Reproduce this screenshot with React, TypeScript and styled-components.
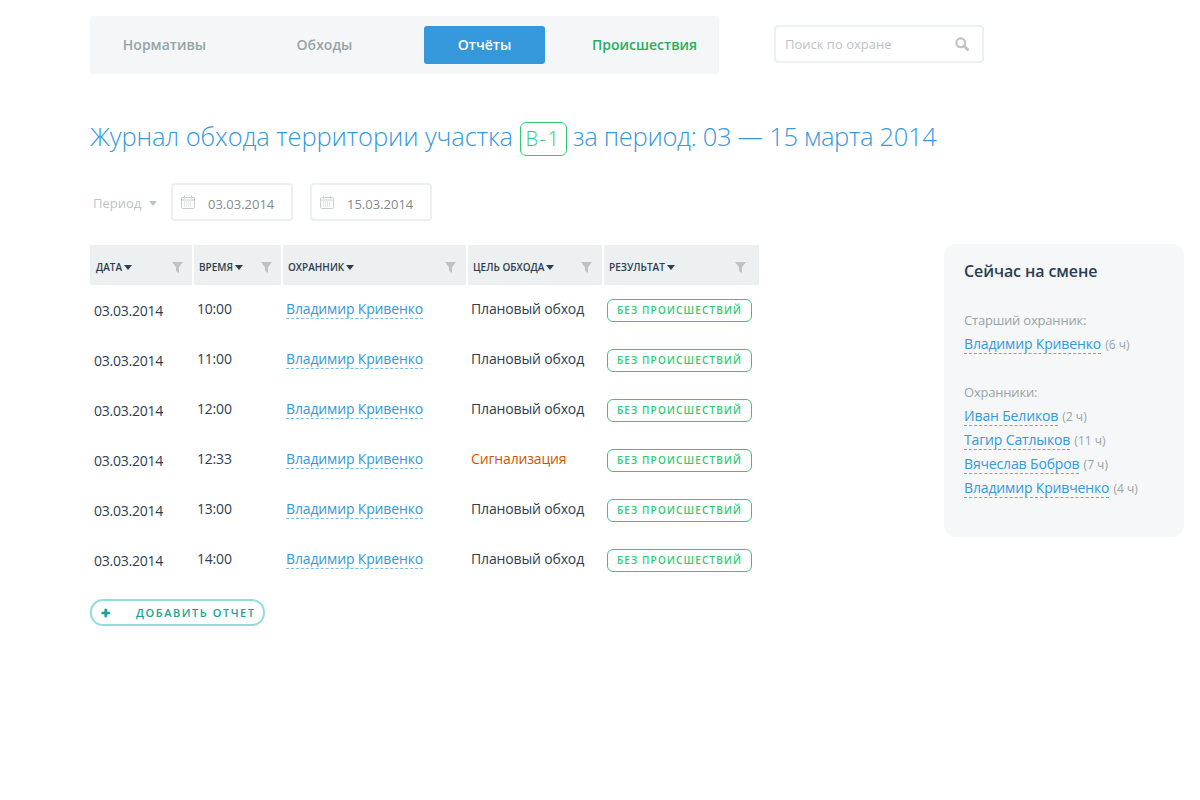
import React from 'react'
import styled, { createGlobalStyle } from 'styled-components'

const rows = [
  { time: '10:00', goal: 'Плановый обход' },
  { time: '11:00', goal: 'Плановый обход' },
  { time: '12:00', goal: 'Плановый обход' },
  { time: '12:33', goal: 'Сигнализация', alarm: true },
  { time: '13:00', goal: 'Плановый обход' },
  { time: '14:00', goal: 'Плановый обход' },
]

const guards = [
  { name: 'Иван Беликов', hours: '2 ч' },
  { name: 'Тагир Сатлыков', hours: '11 ч' },
  { name: 'Вячеслав Бобров', hours: '7 ч' },
  { name: 'Владимир Кривченко', hours: '4 ч' },
]

const columns = [
  { title: 'Дата', width: 104, left: 6, right: 9 },
  { title: 'Время', width: 89, left: 5, right: 9 },
  { title: 'Охранник', width: 185, left: 5, right: 10 },
  { title: 'Цель обхода', width: 136, left: 5, right: 10 },
  { title: 'Результат', width: 155, left: 5, right: 13 },
]

function CalendarIcon() {
  return (
    <svg width="14" height="14" viewBox="0 0 14 14" fill="none">
      <rect x="0.5" y="2.5" width="13" height="11" rx="1" stroke="#c8cdd0" />
      <path d="M0.5 5h13" stroke="#c8cdd0" />
      <path d="M3.5 0.5v3M10.5 0.5v3" stroke="#c8cdd0" />
      <path d="M3 7h8M3 9h8M3 11h8" stroke="#c8cdd0" strokeDasharray="1 1" />
    </svg>
  )
}

function FilterIcon() {
  return (
    <svg width="11" height="11" viewBox="0 0 11 11">
      <path d="M0 0h11L7 5.2V11L4 9V5.2z" fill="#bdc3c7" />
    </svg>
  )
}

function SearchIcon() {
  return (
    <svg width="14" height="14" viewBox="0 0 14 14" fill="none">
      <circle cx="5.8" cy="5.8" r="4.4" stroke="#bdc3c7" strokeWidth="2.2" />
      <path d="M9 9l3.6 3.6" stroke="#bdc3c7" strokeWidth="2.8" strokeLinecap="round" />
    </svg>
  )
}

export default function App(): JSX.Element {
  return (
    <Page>
      <GlobalStyle />
      <TopBar>
        <Nav>
          <NavItem>Нормативы</NavItem>
          <NavItem>Обходы</NavItem>
          <NavItem $active>Отчёты</NavItem>
          <NavItem $green>Происшествия</NavItem>
        </Nav>
        <Search>
          <SearchInput placeholder="Поиск по охране" />
          <SearchIcon />
        </Search>
      </TopBar>

      <Title>
        Журнал обхода территории участка <Sector>В-1</Sector>{' '}
        <TitlePeriod>за период: 03 — 15 марта 2014</TitlePeriod>
      </Title>

      <Filters>
        <PeriodLabel>
          Период <Caret $color="#bdc3c7" />
        </PeriodLabel>
        <DateBox>
          <CalendarIcon />
          <DateValue>03.03.2014</DateValue>
        </DateBox>
        <DateBox>
          <CalendarIcon />
          <DateValue>15.03.2014</DateValue>
        </DateBox>
      </Filters>

      <Content>
        <TableWrap>
          <Table>
            <thead>
              <tr>
                {columns.map((col) => (
                  <HeadCell key={col.title} style={{ width: col.width }}>
                    <HeadInner $left={col.left} $right={col.right}>
                      <HeadTitle>
                        {col.title}
                        <Caret $color="#2c3e50" />
                      </HeadTitle>
                      <FilterIcon />
                    </HeadInner>
                  </HeadCell>
                ))}
              </tr>
            </thead>
            <tbody>
              {rows.map((row) => (
                <tr key={row.time}>
                  <DateCell>03.03.2014</DateCell>
                  <TimeCell>{row.time}</TimeCell>
                  <Cell>
                    <NameLink>Владимир Кривенко</NameLink>
                  </Cell>
                  <GoalCell $alarm={row.alarm}>{row.goal}</GoalCell>
                  <StatusCell>
                    <Status>Без происшествий</Status>
                  </StatusCell>
                </tr>
              ))}
            </tbody>
          </Table>
          <AddButton>
            <PlusSign>✚</PlusSign>
            Добавить отчет
          </AddButton>
        </TableWrap>

        <Shift>
          <ShiftTitle>Сейчас на смене</ShiftTitle>
          <ShiftLabel>Старший охранник:</ShiftLabel>
          <Person>
            <PersonLink>Владимир Кривенко</PersonLink> <Hours>(6 ч)</Hours>
          </Person>
          <ShiftLabel $second>Охранники:</ShiftLabel>
          {guards.map((g) => (
            <Person key={g.name}>
              <PersonLink>{g.name}</PersonLink> <Hours>({g.hours})</Hours>
            </Person>
          ))}
        </Shift>
      </Content>
    </Page>
  )
}

const GlobalStyle = createGlobalStyle`
  body {
    margin: 0;
    background: #fff;
    font-family: "Open Sans", sans-serif;
    color: #2c3e50;
  }
`

const Page = styled.div`
  width: 1200px;
  height: 800px;
  box-sizing: border-box;
  padding: 16px 16px 0 90px;
  overflow: hidden;
`

const TopBar = styled.div`
  display: flex;
  align-items: flex-start;
  gap: 55px;
`

const Nav = styled.nav`
  display: flex;
  gap: 40px;
  width: 629px;
  box-sizing: border-box;
  padding: 10px 14px;
  background: #f4f6f8;
  border-radius: 3px;
`

const NavItem = styled.a<{ $active?: boolean; $green?: boolean }>`
  width: 121px;
  margin-right: -1px;
  height: 38px;
  line-height: 37px;
  text-align: center;
  font-size: 14px;
  font-weight: 600;
  border-radius: 3px;
  color: ${(p) => (p.$active ? '#fff' : p.$green ? '#27ae60' : '#95a5a6')};
  background: ${(p) => (p.$active ? '#3498db' : 'transparent')};
`

const Search = styled.div`
  display: flex;
  align-items: center;
  justify-content: space-between;
  width: 210px;
  height: 38px;
  margin-top: 9px;
  box-sizing: border-box;
  padding: 0 13px 0 9px;
  border: 2px solid #ecf0f1;
  border-radius: 4px;
`

const SearchInput = styled.input`
  width: 150px;
  border: 0;
  padding: 0;
  outline: 0;
  font: 13px "Open Sans", sans-serif;
  &::placeholder {
    color: #bdc3c7;
    opacity: 1;
  }
`

const Title = styled.h1`
  margin: 45px 0 0;
  height: 34px;
  line-height: 34px;
  font-size: 25.5px;
  font-weight: 300;
  letter-spacing: -0.1px;
  color: #3498db;
  white-space: nowrap;
`

const TitlePeriod = styled.span`
  letter-spacing: -0.3px;
`

const Sector = styled.span`
  display: inline-block;
  width: 47px;
  height: 34px;
  box-sizing: border-box;
  line-height: 32px;
  text-align: center;
  font-size: 20px;
  font-weight: 300;
  letter-spacing: 1.5px;
  color: #2ecc71;
  border: 1px solid #2ecc71;
  border-radius: 6px;
`

const Filters = styled.div`
  display: flex;
  align-items: center;
  margin-top: 30px;
  padding-left: 3px;
`

const PeriodLabel = styled.div`
  display: flex;
  align-items: center;
  gap: 6px;
  width: 78px;
  padding-top: 2px;
  font-size: 13px;
  color: #bdc3c7;
`

const DateBox = styled.div`
  display: flex;
  align-items: center;
  gap: 13px;
  width: 122px;
  height: 38px;
  box-sizing: border-box;
  margin-right: 17px;
  padding-left: 8px;
  border: 2px solid #ecf0f1;
  border-radius: 4px;
  font-size: 13px;
  color: #7f8c8d;
`

const DateValue = styled.span`
  padding-top: 4px;
`

const Caret = styled.i<{ $color: string }>`
  display: inline-block;
  width: 0;
  height: 0;
  margin-left: 2px;
  border-left: 4px solid transparent;
  border-right: 4px solid transparent;
  border-top: 5px solid ${(p) => p.$color};
`

const Content = styled.div`
  display: flex;
  align-items: flex-start;
  justify-content: space-between;
  margin-top: 23px;
`

const TableWrap = styled.div`
  width: 669px;
`

const Table = styled.table`
  width: 669px;
  table-layout: fixed;
  border-collapse: separate;
  border-spacing: 0;
  margin-top: 1px;
`

const HeadCell = styled.th`
  height: 40px;
  padding: 0;
  box-sizing: border-box;
  background: #ecf0f1;
  background-clip: padding-box;
  border-right: 2px solid #fff;
  &:last-child {
    border-right: 0;
  }
`

const HeadInner = styled.div<{ $left: number; $right: number }>`
  display: flex;
  align-items: center;
  justify-content: space-between;
  padding: 4px ${(p) => p.$right}px 0 ${(p) => p.$left}px;
`

const HeadTitle = styled.span`
  display: flex;
  align-items: center;
  font-size: 10px;
  font-weight: 600;
  text-transform: uppercase;
  color: #2c3e50;
`

const Cell = styled.td`
  height: 50px;
  padding: 0 0 4px 3px;
  box-sizing: border-box;
  font-size: 14px;
`

const DateCell = styled(Cell)`
  padding: 1px 0 0 4px;
  letter-spacing: -0.25px;
`

const TimeCell = styled(Cell)`
  letter-spacing: -0.2px;
`

const GoalCell = styled(Cell)<{ $alarm?: boolean }>`
  letter-spacing: -0.15px;
  color: ${(p) => (p.$alarm ? '#d35400' : '#2c3e50')};
`

const StatusCell = styled(Cell)`
  padding: 1px 0 0 3px;
`

const NameLink = styled.a`
  letter-spacing: -0.15px;
  color: #3498db;
  border-bottom: 1px dashed #7fbde9;
`

const Status = styled.span`
  display: block;
  width: 145px;
  height: 23px;
  box-sizing: border-box;
  line-height: 21px;
  text-align: center;
  font-size: 10px;
  font-weight: 600;
  letter-spacing: 1.15px;
  text-transform: uppercase;
  color: #2ecc71;
  border: 1px solid #2ecc71;
  border-radius: 6px;
`

const AddButton = styled.button`
  display: flex;
  align-items: center;
  width: 175px;
  height: 27px;
  margin-top: 14px;
  box-sizing: border-box;
  padding: 0 0 0 9px;
  background: #fff;
  border: 2px solid #8fdfd8;
  border-radius: 13px;
  font: 600 11px "Open Sans", sans-serif;
  letter-spacing: 1.55px;
  text-transform: uppercase;
  color: #16a596;
`

const PlusSign = styled.span`
  width: 35px;
  text-align: left;
  font-size: 11px;
  letter-spacing: 0;
`

const Shift = styled.aside`
  width: 240px;
  height: 293px;
  box-sizing: border-box;
  padding: 16px 20px;
  background: #f5f7f9;
  border-radius: 12px;
`

const ShiftTitle = styled.h3`
  margin: 0 0 28px;
  font-size: 16px;
  line-height: 22px;
  font-weight: 600;
  letter-spacing: -0.1px;
  color: #2c3e50;
`

const ShiftLabel = styled.div<{ $second?: boolean }>`
  margin-top: ${(p) => (p.$second ? '27px' : '0')};
  font-size: 13px;
  line-height: 21px;
  letter-spacing: -0.2px;
  color: #95a5a6;
`

const Person = styled.div`
  height: 24px;
  line-height: 24px;
  white-space: nowrap;
`

const PersonLink = styled.a`
  font-size: 14px;
  letter-spacing: -0.15px;
  color: #3498db;
  border-bottom: 1px dashed #5dade2;
`

const Hours = styled.span`
  font-size: 12px;
  color: #95a5a6;
`
